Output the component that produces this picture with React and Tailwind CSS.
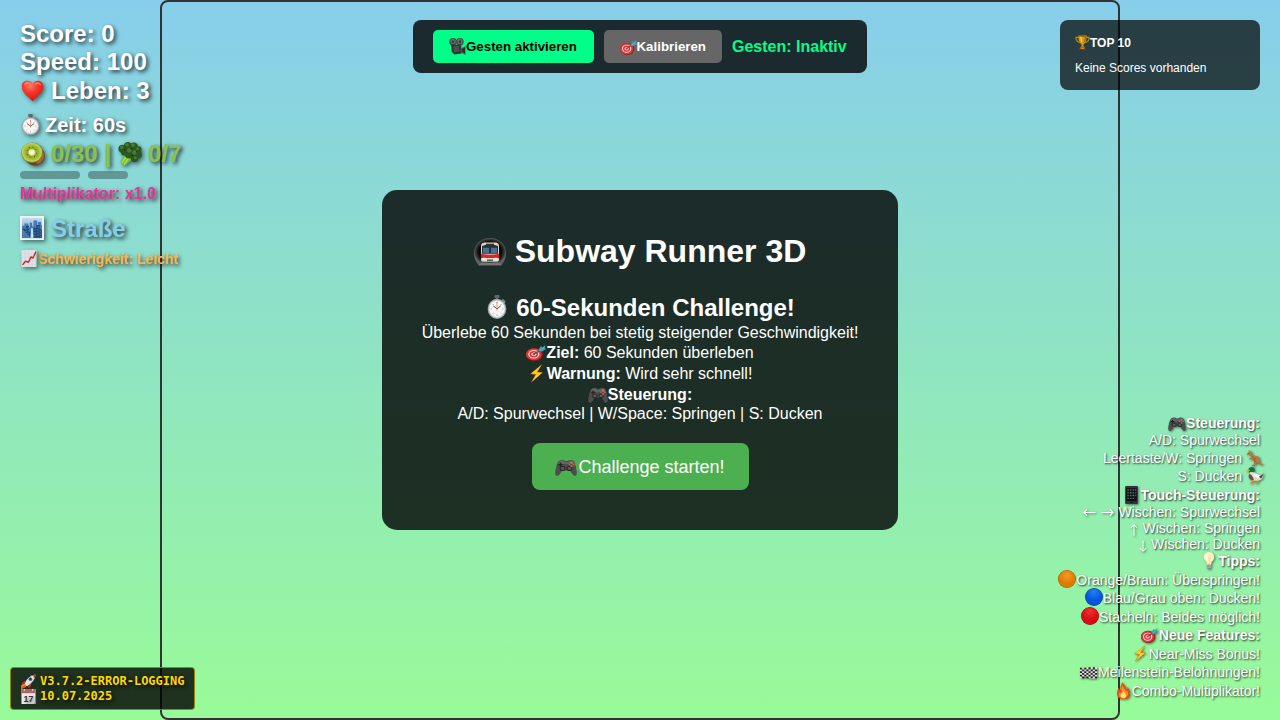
import React from "react";

const drawings = {
  heart: (
    <>
      <defs>
        <radialGradient id="heartFill" cx=".4" cy=".25" r=".8">
          <stop offset="0" stopColor="#ff7a66" />
          <stop offset=".4" stopColor="#fa3a2a" />
          <stop offset="1" stopColor="#c90f10" />
        </radialGradient>
      </defs>
      <path d="M16 31C13 26 1 20 1 9.500C1 4 4.500 1 8.500 1C12 1 15 3 16 6.500C17 3 20 1 23.500 1C27.500 1 31 4 31 9.500C31 20 19 26 16 31Z" fill="url(#heartFill)" />
      <path d="M4 8Q5 3 9 3Q13 4 13 7Q9 4 4 8M19 7Q20 3 24 3.500Q28 4 28 8Q24 4 19 7" fill="#ffa08f" opacity=".7" />
    </>
  ),
  watch: (
    <>
      <rect x="12" y="0" width="8" height="4" rx="1.500" fill="#626b75" />
      <rect x="14" y="3" width="4" height="4" fill="#535b63" />
      <path d="M25 5L30 8.500L28 11.500L23 8Z" fill="#7c848b" />
      <ellipse cx="16" cy="18.500" rx="15" ry="13.500" fill="#9da3a8" />
      <ellipse cx="16" cy="18.500" rx="13.300" ry="12" fill="#d0d4d7" />
      <ellipse cx="16" cy="18.500" rx="12" ry="10.700" fill="#f7f7f5" />
      <g stroke="#777" strokeWidth=".9"><path d="M16 9v2M16 26v2M6 18.500h2M24 18.500h2M9 12l1.300 1.300M23 12l-1.300 1.300M9 25l1.300-1.300M23 25l-1.300-1.300" /></g>
      <path d="M10 14.500L16 18.500L22 14.500" fill="none" stroke="#333" strokeWidth="1.200" />
      <path d="M16 21V9" stroke="#e6705f" strokeWidth="1" />
    </>
  ),
  kiwi: (
    <>
      <defs>
        <radialGradient id="kiwiFlesh">
          <stop offset="0" stopColor="#fffde2" />
          <stop offset=".25" stopColor="#f2f0bd" />
          <stop offset=".4" stopColor="#8da92b" />
          <stop offset=".7" stopColor="#9dbd30" />
          <stop offset="1" stopColor="#c8da61" />
        </radialGradient>
      </defs>
      <ellipse cx="18.500" cy="18.500" rx="13.500" ry="13" fill="#68421f" />
      <path d="M20 30Q30 28 31 18L29 12Z" fill="#9a6c38" />
      <ellipse cx="15" cy="14.300" rx="14.500" ry="13.800" fill="#8f7b2f" />
      <ellipse cx="14.500" cy="13.800" rx="13.500" ry="12.900" fill="url(#kiwiFlesh)" />
      <g fill="#49541b"><circle cx="8.500" cy="11" r=".7" /><circle cx="11" cy="7.500" r=".7" /><circle cx="16" cy="7" r=".7" /><circle cx="20" cy="10" r=".7" /><circle cx="21" cy="15" r=".7" /><circle cx="18" cy="19.500" r=".7" /><circle cx="12" cy="20" r=".7" /><circle cx="8.500" cy="16.500" r=".7" /></g>
    </>
  ),
  broccoli: (
    <>
      <path d="M11 15L3 26Q3 29 7 31L11 30L23 19Z" fill="#72bc34" />
      <path d="M12 18L5 28M16 19L8 30" stroke="#a7dd5c" strokeWidth="1.800" />
      <g fill="#2c581f"><circle cx="6" cy="9" r="5.500" /><circle cx="13" cy="5" r="5" /><circle cx="21" cy="6" r="5.500" /><circle cx="27" cy="10" r="4.500" /><circle cx="27" cy="17" r="5" /><circle cx="22" cy="22" r="5" /><circle cx="15" cy="15" r="7" /><circle cx="8" cy="14" r="4" /></g>
      <g fill="#477b32"><circle cx="5" cy="7" r="2.300" /><circle cx="12" cy="3.500" r="2.300" /><circle cx="20" cy="4" r="2.500" /><circle cx="26" cy="9" r="2" /><circle cx="15" cy="11" r="3" /><circle cx="22" cy="14" r="3" /><circle cx="23" cy="21" r="2" /></g>
      <g fill="#183b13"><circle cx="9" cy="10" r="1.300" /><circle cx="18" cy="9" r="1.300" /><circle cx="19" cy="18" r="1.500" /><circle cx="25" cy="13" r="1" /></g>
    </>
  ),
  city: (
    <>
      <defs><linearGradient id="citySky" x2="0" y2="1"><stop stopColor="#c3ddf3" /><stop offset="1" stopColor="#4a84be" /></linearGradient></defs>
      <rect width="32" height="32" rx="1" fill="#f2f3f3" />
      <rect x="2.500" y="2.500" width="27" height="27" fill="url(#citySky)" />
      <path d="M3 13h3V10h5v5h2V9h3v5h2V6h5v7h1V8h4v4h1v17H3Z" fill="#4576aa" />
      <path d="M3 17h5v-4h4v8h2v8M18 29V16h4v-4h4v6h3v11Z" fill="#1d4777" />
      <path d="M14 29l1-13h2l1 13Z" fill="#b5e8fb" />
      <path d="M5 20v8M8 16v11M11 15v12M20 18v10M24 14v14M27 20v8M20 8v6M9 11v3" stroke="#6f9ecd" strokeWidth=".9" strokeDasharray="2 1.500" />
    </>
  ),
  chart: (
    <>
      <rect x="1" y="0" width="30" height="32" fill="#dfe3e6" />
      <path d="M1 7h30M1 14h30M1 21h30M1 28h30M8 0v32M15 0v32M22 0v32M29 0v32" stroke="#c9cfd3" strokeWidth=".8" />
      <path d="M3 28L9 21L15 23L20 13L24 15L30 3" stroke="#c9252c" strokeWidth="2.800" fill="none" strokeLinejoin="round" />
    </>
  ),
  camera: (
    <>
      <circle cx="7.500" cy="7" r="7" fill="#3f4040" /><circle cx="20.500" cy="7" r="7" fill="#3f4040" />
      <circle cx="7.500" cy="6.500" r="5" fill="#6d6e6e" /><circle cx="20.500" cy="6.500" r="5" fill="#6d6e6e" />
      <circle cx="7.500" cy="7" r="2.300" fill="#323434" /><circle cx="20.500" cy="7" r="2.300" fill="#323434" />
      <path d="M4 12L23 13L24 29L10 31L5 26Z" fill="#333636" />
      <path d="M8 16L18 15L20 25L10 27Z" fill="#4b4f4f" />
      <path d="M22 20L31 15V32L22 27Z" fill="#505454" />
      <path d="M25 20L30 18V29L25 26Z" fill="#282c2c" />
    </>
  ),
  target: (
    <>
      <ellipse cx="13.500" cy="19" rx="13.500" ry="13" fill="#9b191d" />
      <ellipse cx="12.500" cy="18.500" rx="12.500" ry="12" fill="#df3438" />
      <ellipse cx="12.500" cy="18.500" rx="8.800" ry="8.600" fill="#f7ded9" />
      <ellipse cx="12.500" cy="18.500" rx="6.800" ry="6.600" fill="#dc3539" />
      <ellipse cx="12.500" cy="18.500" rx="4" ry="3.700" fill="#f7ded9" />
      <circle cx="12.500" cy="18.500" r="2" fill="#ce2427" />
      <path d="M13 18L25 9" stroke="#375c65" strokeWidth="2" />
      <path d="M20 9L24 2L26 5L31 0L30 6L32 8L26 13L22 13Z" fill="#389eab" />
      <path d="M22 11L30 4" stroke="#73d7db" />
    </>
  ),
  trophy: (
    <>
      <path d="M8 5H2Q1 14 12 17M24 5h6Q31 14 20 17" fill="none" stroke="#c98507" strokeWidth="2.500" />
      <path d="M7 1H25Q25 15 18 20V25H14V20Q7 15 7 1Z" fill="#d69a12" />
      <path d="M11 3Q11 13 16 18Q14 11 15 3Z" fill="#f2cb49" />
      <path d="M21 3Q21 13 17 18Q23 14 24 3Z" fill="#a96002" />
      <ellipse cx="16" cy="2" rx="9" ry="1.700" fill="#8f5c03" />
      <path d="M13 24h6l3 4H10Z" fill="#c87d10" /><rect x="8" y="27" width="16" height="5" rx="1" fill="#71301a" /><rect x="12" y="28" width="8" height="2" fill="#d59a27" />
    </>
  ),
  metro: (
    <>
      <defs><radialGradient id="tunnel"><stop stopColor="#000" /><stop offset=".7" stopColor="#080808" /><stop offset=".9" stopColor="#353535" /><stop offset="1" stopColor="#626262" /></radialGradient></defs>
      <path d="M5 31Q0 26 0 17A16 17 0 0 1 32 17Q32 26 27 31Z" fill="url(#tunnel)" />
      <path d="M8 28H24L28 31H4Z" fill="#777" />
      <path d="M7 9Q7 5 11 5H21Q25 5 25 9V25Q25 27 23 27H9Q7 27 7 25Z" fill="#ddd7c7" />
      <path d="M8 9Q16 6 24 9V18H8Z" fill="#25313c" />
      <path d="M9 11h6v6H9ZM17 11h6v6h-6Z" fill="#496f91" />
      <rect x="12" y="6.500" width="8" height="2" fill="#393129" />
      <path d="M7 18Q16 20 25 18V23H7Z" fill="#d82431" />
      <path d="M8 23h16v2H8Z" fill="#eee6d3" />
      <rect x="8.500" y="22.500" width="3.500" height="2" rx="1" fill="#fffbd1" /><rect x="20" y="22.500" width="3.500" height="2" rx="1" fill="#fffbd1" /><rect x="13" y="24.500" width="6" height="2" fill="#62605a" />
    </>
  ),
  bolt: (
    <>
      <path d="M27 0L4 17L14 18L5 32L28 14L18 13Z" fill="#d87907" />
      <path d="M25 2L6 16L16 17L8 29L26 15L16 14Z" fill="#ffcf22" />
    </>
  ),
  gamepad: (
    <>
      <path d="M7 4Q12 2 15 5H18Q21 2 26 4Q29 5 31 19Q33 30 29 30Q26 30 22 21H10Q7 30 3 30Q-1 30 1 19Q3 5 7 4Z" fill="#4d4d4d" />
      <path d="M7 5Q12 3 15 7H18Q21 3 26 5L28 10H4Z" fill="#646464" />
      <circle cx="11" cy="17.500" r="4.300" fill="#292929" /><circle cx="21" cy="17.500" r="4.300" fill="#292929" />
      <circle cx="11" cy="17.500" r="2.500" fill="#5c5c5c" /><circle cx="21" cy="17.500" r="2.500" fill="#5c5c5c" />
      <path d="M8 8v6M5 11h6" stroke="#222" strokeWidth="2" />
      <circle cx="24" cy="8" r="1.600" fill="#e17836" /><circle cx="27" cy="11" r="1.600" fill="#dd5924" /><circle cx="21" cy="11" r="1.300" fill="#a5765d" /><circle cx="24" cy="14" r="1.600" fill="#dd6534" />
    </>
  ),
  kangaroo: (
    <>
      <path d="M5 2Q3 0 6 1L9 5L8 0L11 5Q11 11 17 12Q26 12 25 22Q25 28 32 29Q25 32 22 26L18 27L16 32H10V30L14 29L14 22L11 18L7 19L5 17L10 14L8 10L1 9Q0 7 5 5Z" fill="#b77b42" />
      <path d="M10 12Q15 14 14 20M17 16Q12 22 19 25" fill="none" stroke="#825122" strokeWidth="1.200" /><circle cx="5" cy="6.500" r=".8" fill="#211309" />
    </>
  ),
  duck: (
    <>
      <path d="M12 23L12 29L8 31M21 24V29L17 31" stroke="#ef7b19" strokeWidth="2.500" fill="none" />
      <path d="M7 12Q15 8 24 17L32 13L29 22Q25 27 14 26Q4 24 7 12Z" fill="#d9d9d5" />
      <path d="M6 14Q3 19 7 23Q12 27 14 24Q11 15 6 14Z" fill="#784b34" />
      <path d="M12 15Q22 12 27 20Q19 24 12 15Z" fill="#f8f8f3" /><path d="M23 19L32 13L27 22Z" fill="#443f3d" />
      <path d="M5 4Q13-1 16 6L14 12H7Q3 9 5 4Z" fill="#11723e" /><path d="M7 12h8" stroke="#fff" strokeWidth="1.500" /><path d="M6 6L0 8Q0 11 7 9Z" fill="#eda527" /><circle cx="8" cy="5.500" r="1" fill="#071" />
    </>
  ),
  phone: (
    <>
      <rect x="4" y="0" width="24" height="32" rx="2" fill="#343434" />
      <rect x="6" y="4" width="20" height="23" fill="#0b1119" />
      <g><path d="M8 7h3M18 12h3M13 17h3M8 22h3" stroke="#356984" strokeWidth="2.500" /><path d="M13 7h3M23 12h2M8 17h3M18 22h3" stroke="#874950" strokeWidth="2.500" /><path d="M18 7h3M8 12h3M23 17h2M13 22h3" stroke="#496d48" strokeWidth="2.500" /><path d="M23 7h2M13 12h3M18 17h3" stroke="#84754c" strokeWidth="2.500" /></g>
      <rect x="14" y="28" width="4" height="2" fill="#151515" />
    </>
  ),
  bulb: (
    <>
      <path d="M16 0C8 0 4 5 4 10Q4 15 10 19L11 24H21L22 19Q28 15 28 10C28 5 24 0 16 0Z" fill="#fff0ba" />
      <path d="M12 3Q6 6 8 12L13 19Z" fill="#fffdf0" /><path d="M13 11l3 3l3-3M16 14v10" stroke="#edc96a" fill="none" strokeWidth="1.200" />
      <path d="M11 24h10v6l-3 2h-4l-3-2Z" fill="#858b91" /><path d="M11 26h10M11 29h10" stroke="#d3d5d7" />
    </>
  ),
  orange: (
    <>
      <defs><radialGradient id="orangeBall" cx=".5" cy=".3"><stop stopColor="#f59a27" /><stop offset="1" stopColor="#df7a02" /></radialGradient></defs>
      <circle cx="16" cy="16" r="16" fill="#ad5c00" /><circle cx="16" cy="16" r="14.800" fill="url(#orangeBall)" />
    </>
  ),
  blue: (
    <>
      <defs><radialGradient id="blueBall" cx=".5" cy=".2"><stop stopColor="#237ff4" /><stop offset="1" stopColor="#0756da" /></radialGradient></defs>
      <circle cx="16" cy="16" r="16" fill="#063d9e" /><circle cx="16" cy="16" r="14.800" fill="url(#blueBall)" />
    </>
  ),
  red: (
    <>
      <defs><radialGradient id="redBall" cx=".5" cy=".2"><stop stopColor="#ef332e" /><stop offset="1" stopColor="#d80e16" /></radialGradient></defs>
      <circle cx="16" cy="16" r="16" fill="#980b10" /><circle cx="16" cy="16" r="14.800" fill="url(#redBall)" />
    </>
  ),
  flag: (
    <>
      <path d="M0 3Q8 6 16 3T32 3V27Q24 31 16 27T0 28Z" fill="#e3e5df" />
      <path d="M0 4h4v4H0M8 4h4v4H8M16 3h4v5h-4M24 3h4v5h-4M4 8h4v4H4M12 8h4v4h-4M20 8h4v4h-4M28 8h4v4h-4M0 12h4v4H0M8 12h4v4H8M16 12h4v4h-4M24 12h4v4h-4M4 16h4v4H4M12 16h4v4h-4M20 16h4v4h-4M28 16h4v4h-4M0 20h4v4H0M8 20h4v4H8M16 20h4v4h-4M24 20h4v4h-4M4 24h4v4H4M12 24h4v4h-4M20 24h4v4h-4M28 24h4v4h-4" fill="#222" />
    </>
  ),
  fire: (
    <>
      <path d="M14 0Q16 5 20 8Q22 12 22 15Q25 13 25 9Q30 15 30 21Q30 32 16 32Q2 32 2 21Q2 16 6 11Q7 15 10 16Q8 7 14 0Z" fill="#ee471b" />
      <path d="M14 5Q14 10 19 14Q22 19 25 17Q28 30 16 31Q4 30 6 19Q10 23 12 18Q11 10 14 5Z" fill="#ff921c" />
      <path d="M15 17Q24 23 20 29Q16 33 11 28Q8 24 12 21Q15 22 15 17Z" fill="#ffe873" />
    </>
  ),
  rocket: (
    <>
      <path d="M8 14L2 19L1 25L10 20M17 24L14 31L20 28L23 19" fill="#bd2828" />
      <path d="M8 21L1 24L0 32L8 29L14 24Z" fill="#f3a019" /><path d="M8 23L3 27L2 30L9 28Z" fill="#e94319" />
      <path d="M8 20Q14 4 31 1Q30 16 13 26Z" fill="#d9dee2" /><path d="M23 3L31 1L29 9Z" fill="#c53636" />
      <path d="M9 22L27 4" stroke="#fff" strokeWidth="2" /><circle cx="20" cy="11" r="4" fill="#567f9d" /><circle cx="20" cy="11" r="2.300" fill="#192e43" />
    </>
  ),
  calendar: (
    <>
      <path d="M1 0H31V32H1Z" fill="#efefed" /><path d="M1 0H31V9H1Z" fill="#b66060" />
      <path d="M7 0v4M25 0v4" stroke="#eee" strokeWidth="2" /><path d="M26 32L31 27V32Z" fill="#aaa" />
      <text x="16" y="27" textAnchor="middle" fontFamily="Liberation Sans, sans-serif" fontSize="19" fill="#333">17</text>
    </>
  ),
  arrowLeft: <path d="M31 16H2M10 8L2 16L10 24" fill="none" stroke="#fff" strokeWidth="2.700" />,
  arrowRight: <path d="M1 16H30M22 8L30 16L22 24" fill="none" stroke="#fff" strokeWidth="2.700" />,
  arrowUp: <path d="M16 31V2M8 10L16 2L24 10" fill="none" stroke="#fff" strokeWidth="2.700" />,
  arrowDown: <path d="M16 1V30M8 22L16 30L24 22" fill="none" stroke="#fff" strokeWidth="2.700" />,
};

function Icon({ name, className }) {
  return (
    <svg viewBox="0 0 32 32" preserveAspectRatio="none" className={"block shrink-0 " + className} aria-hidden="true">
      {drawings[name]}
    </svg>
  );
}

const HUD_ICON = "drop-shadow-[2px_2px_2px_rgba(0,0,0,0.5)] ";

function Hud() {
  return (
    <div className="absolute left-5 top-5 flex flex-col text-2xl font-bold whitespace-nowrap text-white [text-shadow:2px_2px_4px_rgba(0,0,0,0.8)]">
      <div className="h-7 leading-7">Score: 0</div>
      <div className="h-7 leading-7">Speed: 100</div>
      <div className="flex h-[30px] items-center">
        <Icon name="heart" className={HUD_ICON + "ml-px mr-[7px] mb-px h-[22px] w-[23px]"} />
        <span>Leben: 3</span>
      </div>
      <div className="mt-[7px] flex h-6 items-center text-xl">
        <Icon name="watch" className={HUD_ICON + "ml-px mr-[5px] mb-0.5 h-[21px] w-[19px]"} />
        <span>Zeit: 60s</span>
      </div>
      <div className="mt-0.5 flex h-[30px] items-center text-[#8bc34a]">
        <Icon name="kiwi" className={HUD_ICON + "ml-px mr-[6px] mb-px h-6 w-6"} />
        <span>0/30 |</span>
        <Icon name="broccoli" className={HUD_ICON + "ml-[7px] mr-[6px] mb-px h-6 w-6"} />
        <span>0/7</span>
      </div>
      <div className="mt-0.5 flex h-2 gap-2">
        <div className="w-[60px] rounded-full bg-black/30" />
        <div className="w-10 rounded-full bg-black/30" />
      </div>
      <div className="mt-[5px] h-[19px] text-base leading-[19px] text-[#e9359b]">Multiplikator: x1.0</div>
      <div className="mt-3 flex h-7 items-center text-[#87ceeb]">
        <Icon name="city" className={HUD_ICON + "mr-[7px] mb-0.5 h-6 w-6"} />
        <span>Straße</span>
      </div>
      <div className="mt-[6px] flex h-5 items-center text-sm text-[#ffb347]">
        <Icon name="chart" className={HUD_ICON + "ml-px mr-px mb-0.5 h-[17px] w-4"} />
        <span>Schwierigkeit: Leicht</span>
      </div>
    </div>
  );
}

function GestureBar() {
  return (
    <div className="absolute left-[413px] top-5 flex h-[53px] w-[454px] items-center gap-2.5 rounded-lg bg-black/80 px-5 font-bold whitespace-nowrap">
      <button className="flex h-[33px] w-[160.500px] items-center rounded-[5px] bg-[#00ff88] pl-4 text-[13.300px] text-black">
        <Icon name="camera" className="h-[17px] w-[17px]" />
        <span className="mt-px">Gesten aktivieren</span>
      </button>
      <button className="flex h-[33px] w-[118.500px] items-center rounded-[5px] bg-[#666] pl-4 text-[13.300px] text-white">
        <Icon name="target" className="mt-0.5 h-[15px] w-[17px]" />
        <span className="mt-px">Kalibrieren</span>
      </button>
      <span className="text-base text-[#00ff88]">Gesten: Inaktiv</span>
    </div>
  );
}

function Scores() {
  return (
    <div className="absolute right-5 top-5 flex h-[70px] w-[200px] flex-col rounded-lg bg-black/70 px-[15px] pt-[14px] text-xs text-white">
      <div className="flex h-[17px] items-center font-bold">
        <Icon name="trophy" className="h-[15px] w-[15px]" />
        <span>TOP 10</span>
      </div>
      <div className="mt-2 h-[18px] leading-[18px]">Keine Scores vorhanden</div>
    </div>
  );
}

function StartPanel() {
  return (
    <div className="absolute left-[382px] top-[190px] flex h-[340px] w-[516px] flex-col items-center rounded-[15px] bg-black/80 pt-[42px] text-base whitespace-nowrap text-white">
      <h1 className="flex h-[38px] items-center text-[32px] font-bold">
        <Icon name="metro" className="mr-[9px] mt-0.5 h-7 w-8" />
        <span>Subway Runner 3D</span>
      </h1>
      <h2 className="mt-[23px] flex h-[30px] items-center text-2xl font-bold">
        <Icon name="watch" className="mr-[9px] ml-0.5 mb-0.5 h-6 w-5" />
        <span>60-Sekunden Challenge!</span>
      </h2>
      <p className="h-[19px] leading-[19px]">Überlebe 60 Sekunden bei stetig steigender Geschwindigkeit!</p>
      <p className="flex h-[21px] items-center">
        <Icon name="target" className="h-4 w-5" />
        <span><b>Ziel:</b> 60 Sekunden überleben</span>
      </p>
      <p className="flex h-[21px] items-center">
        <Icon name="bolt" className="mr-0.5 mb-px h-[19px] w-[17px]" />
        <span><b>Warnung:</b> Wird sehr schnell!</span>
      </p>
      <p className="flex h-[21px] items-center">
        <Icon name="gamepad" className="h-[18px] w-5" />
        <b>Steuerung:</b>
      </p>
      <p className="h-[18px] leading-[18px]">A/D: Spurwechsel | W/Space: Springen | S: Ducken</p>
      <button className="mt-5 flex h-[47px] w-[217px] items-center justify-center rounded-lg bg-[#4caf50] text-lg">
        <Icon name="gamepad" className="mr-px mt-0.5 h-[19px] w-[22px]" />
        <span>Challenge starten!</span>
      </button>
    </div>
  );
}

const ROW_ICON = "drop-shadow-[1px_1px_1px_rgba(0,0,0,0.5)] ";

function Help() {
  return (
    <div className="absolute right-5 top-[415px] flex flex-col text-sm leading-4 whitespace-nowrap text-white [text-shadow:1px_1px_2px_rgba(0,0,0,0.8)] *:flex *:items-end *:justify-end">
      <div className="h-4 font-bold"><Icon name="gamepad" className={ROW_ICON + "-mb-px h-[16px] w-[18px]"} /><span>Steuerung:</span></div>
      <div className="h-[17px]">A/D: Spurwechsel</div>
      <div className="h-[18px]"><span>Leertaste/W: Springen</span><Icon name="kangaroo" className={ROW_ICON + "-mr-1 ml-1 h-[16px] w-[18px]"} /></div>
      <div className="h-[18px]"><span>S: Ducken</span><Icon name="duck" className={ROW_ICON + "-mr-1 ml-1 h-[18px] w-[18px]"} /></div>
      <div className="h-[19px] font-bold"><Icon name="phone" className={ROW_ICON + "-mb-px h-[18px] w-[17px]"} /><span>Touch-Steuerung:</span></div>
      <div className="h-[17px]">
        <Icon name="arrowLeft" className={ROW_ICON + "mr-[5px] mb-px h-[13px] w-[13px]"} />
        <Icon name="arrowRight" className={ROW_ICON + "mr-1 mb-px h-[13px] w-[13px]"} />
        <span>Wischen: Spurwechsel</span>
      </div>
      <div className="h-4"><Icon name="arrowUp" className={ROW_ICON + "mr-0.5 h-[12px] w-[12px]"} /><span>Wischen: Springen</span></div>
      <div className="h-4"><Icon name="arrowDown" className={ROW_ICON + "mr-0.5 h-[12px] w-[12px]"} /><span>Wischen: Ducken</span></div>
      <div className="h-[17px] font-bold"><Icon name="bulb" className={ROW_ICON + "mr-0.5 h-[17px] w-[14px]"} /><span>Tipps:</span></div>
      <div className="h-[19px]"><Icon name="orange" className="h-[18px] w-[18px]" /><span>Orange/Braun: Überspringen!</span></div>
      <div className="h-[18px]"><Icon name="blue" className="h-[18px] w-[18px]" /><span>Blau/Grau oben: Ducken!</span></div>
      <div className="h-[19px]"><Icon name="red" className="h-[18px] w-[18px]" /><span>Stacheln: Beides möglich!</span></div>
      <div className="h-[18px] font-bold"><Icon name="target" className={ROW_ICON + "mr-px h-[15px] w-[17px]"} /><span>Neue Features:</span></div>
      <div className="h-[19px]"><Icon name="bolt" className={ROW_ICON + "mr-px h-[17px] w-4"} /><span>Near-Miss Bonus!</span></div>
      <div className="h-[18px]"><Icon name="flag" className={ROW_ICON + "mr-px h-[14px] w-[17px]"} /><span>Meilenstein-Belohnungen!</span></div>
      <div className="h-[19px]"><Icon name="fire" className={ROW_ICON + "mr-px h-[17px] w-[15px]"} /><span>Combo-Multiplikator!</span></div>
    </div>
  );
}

function Version() {
  return (
    <div className="absolute bottom-2.5 left-2.5 flex h-[43px] w-[185px] flex-col justify-center rounded-[4px] border border-[#ffd700]/50 bg-black/80 pl-[9px] font-['DejaVu_Sans_Mono',monospace] text-xs font-bold whitespace-nowrap text-[#ffd700] [text-shadow:2px_2px_4px_rgba(0,0,0,0.8)]">
      <div className="flex h-[15px] items-center"><Icon name="rocket" className="ml-px mr-1 h-[15px] w-[15px]" /><span>V3.7.2-ERROR-LOGGING</span></div>
      <div className="flex h-[15px] items-center"><Icon name="calendar" className="ml-px mr-1 h-[15px] w-[15px]" /><span>10.07.2025</span></div>
    </div>
  );
}

export default function App() {
  return (
    <main className="relative flex h-[720px] w-[1280px] justify-center overflow-hidden bg-[#98fb98] bg-[linear-gradient(to_bottom,#87ceeb,#98fb98)] font-['Liberation_Sans',Arial,sans-serif]">
      <div className="h-[720px] w-[960px] rounded-lg border-2 border-[#333]" />
      <Hud />
      <GestureBar />
      <Scores />
      <StartPanel />
      <Help />
      <Version />
    </main>
  );
}
